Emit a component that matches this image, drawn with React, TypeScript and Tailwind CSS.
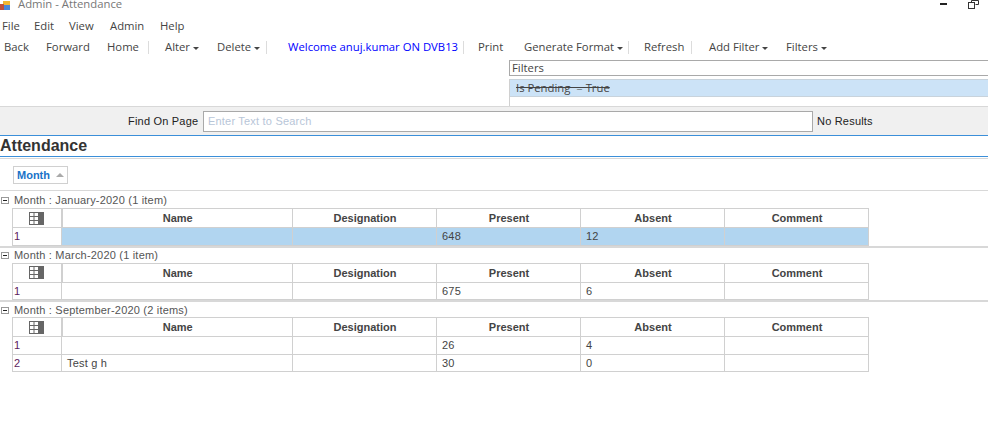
const ui = { fontFamily: '"Open Sans", "Noto Sans", sans-serif' };

type Row = { num: number; name?: string; present: string; absent: string; selected?: boolean };
type Group = { title: string; rows: Row[] };

const groups: Group[] = [
  { title: "Month : January-2020 (1 item)", rows: [{ num: 1, present: "648", absent: "12", selected: true }] },
  { title: "Month : March-2020 (1 item)", rows: [{ num: 1, present: "675", absent: "6" }] },
  {
    title: "Month : September-2020 (2 items)",
    rows: [
      { num: 1, present: "26", absent: "4" },
      { num: 2, name: "Test g h", present: "30", absent: "0" },
    ],
  },
];

const columns = ["Name", "Designation", "Present", "Absent", "Comment"];

function Caret() {
  return <span className="ml-[3px] inline-block border-x-[3px] border-t-[3px] border-x-transparent border-t-[#444] align-middle" />;
}

function Sep() {
  return <span className="h-[13px] w-px shrink-0 bg-[#dcdcdc]" />;
}

function GridIcon() {
  return (
    <svg width="15" height="13" viewBox="0 0 15 13" className="mx-auto block">
      <rect x="0.5" y="0.5" width="14" height="12" fill="#fff" stroke="#666" />
      <path d="M5 0v13M9.500 0v13M0 4.500h15M0 8.500h15" stroke="#666" />
      <rect x="10" y="0" width="5" height="13" fill="#666" />
    </svg>
  );
}

function Collapse() {
  return (
    <span className="flex h-[7px] w-[8px] items-center justify-center border border-[#999] bg-white">
      <span className="h-px w-[4px] bg-[#222]" />
    </span>
  );
}

function AppIcon() {
  return (
    <svg width="10" height="9" viewBox="0 0 10 9" className="shrink-0">
      <rect x="3" y="0" width="7" height="4" fill="#f2b632" />
      <rect x="0" y="3" width="4" height="6" fill="#c0503c" />
      <rect x="4" y="4" width="6" height="5" fill="#4a86d8" />
    </svg>
  );
}

export default function App() {
  return (
    <div className="h-[432px] w-[988px] overflow-hidden whitespace-nowrap bg-white text-[11.3px] text-[#444]" style={ui}>
      {/* title bar, cut off at the top */}
      <div className="flex h-[10px] items-center overflow-hidden">
        <AppIcon />
        <span className="ml-[8px] -translate-y-[1px] text-[#777]">Admin - Attendance</span>
        <div className="ml-auto mr-[9px] flex items-center gap-[21px]">
          <span className="h-[2px] w-[7px] -translate-y-[1px] bg-[#222]" />
          <svg width="11" height="9" viewBox="0 0 11 9" className="-translate-y-[1px]">
            <path d="M3.500 2.500V.500h7v4H7.500" fill="none" stroke="#333" />
            <rect x="0.500" y="2.500" width="6" height="6" fill="#fff" stroke="#333" />
          </svg>
        </div>
      </div>

      {/* menu */}
      <div className="mt-[7px] flex h-[18px] items-center pl-[2px]">
        <span className="w-[32px]">File</span>
        <span className="w-[35px]">Edit</span>
        <span className="w-[41px]">View</span>
        <span className="w-[50px]">Admin</span>
        <span>Help</span>
      </div>

      {/* toolbar */}
      <div className="mt-[4px] flex h-[17px] items-center pl-[4px]">
        <span className="w-[42px]">Back</span>
        <span className="w-[61px]">Forward</span>
        <span className="w-[41px]">Home</span>
        <Sep />
        <span className="ml-[16px] w-[52px]">Alter<Caret /></span>
        <span className="w-[49px]">Delete<Caret /></span>
        <Sep />
        <span className="ml-[21px] w-[175px] text-[#0000ff]">Welcome anuj.kumar ON DVB13</span>
        <Sep />
        <span className="ml-[14px] w-[46px]">Print</span>
        <span className="w-[104px]">Generate Format<Caret /></span>
        <Sep />
        <span className="ml-[15px] w-[47px]">Refresh</span>
        <Sep />
        <span className="ml-[17px] w-[77px]">Add Filter<Caret /></span>
        <span>Filters<Caret /></span>
      </div>

      {/* filters panel */}
      <div className="ml-[509px] mt-[4px] flex h-[46px] flex-col">
        <div className="flex h-[16px] items-center border-y border-l border-[#a9a9a9] pl-[2px] leading-none">Filters</div>
        <div className="mt-[3px] flex flex-1 flex-col border-l border-[#d0d0d0]">
          <div className="flex h-[18px] items-center border-y border-[#c8d3dc] bg-[#cce3f7] pl-[6px] line-through">Is Pending&nbsp; = True</div>
        </div>
      </div>

      {/* find bar */}
      <div className="flex h-[29px] items-center border-t border-[#d8d8d8] bg-[#f0f0f0] text-[11px] tracking-[0.2px] text-[#222]" style={{ fontFamily: '"Liberation Sans", sans-serif' }}>
        <span className="ml-[128px] w-[75px]">Find On Page</span>
        <div className="flex h-[21px] w-[610px] items-center border border-[#a9a9a9] bg-white pl-[4px] text-[#b8c6d8]">Enter Text to Search</div>
        <span className="ml-[4px]">No Results</span>
      </div>

      <div style={{ fontFamily: '"Liberation Sans", sans-serif' }} className="text-[11px]">
        {/* heading */}
        <div className="h-[22px] border-y border-[#3b8fd9] text-[16px] font-bold leading-[19px] text-[#333]">Attendance</div>
        <div className="mt-[1px] border-t border-[#d8d8d8]" />

        {/* group chip */}
        <div className="flex h-[32px] items-center border-b border-[#d8d8d8] pl-[13px] pt-[1px]">
          <div className="flex h-[18px] w-[55px] items-center border border-[#d0d0d0] pl-[3px] font-bold text-[#1a73c8]">
            Month
            <span className="ml-[6px] border-x-[4px] border-b-[4px] border-x-transparent border-b-[#aaa]" />
          </div>
        </div>

        {groups.map((group, idx) => (
          <div key={group.title} className={idx === 0 ? "" : "border-t-2 border-[#d8d8d8]"}>
            <div className={`flex items-center ${idx === 0 ? "h-[17px] pt-[1px]" : "-mb-px h-[16px]"}`}>
              <span className="ml-[1px]"><Collapse /></span>
              <span className="ml-[5px] tracking-[0.2px] text-[#555]">{group.title}</span>
            </div>
            <table className="ml-[12px] w-[856px] table-fixed border-collapse">
              <colgroup>
                <col className="w-[49px]" />
                <col className="w-[231px]" />
                <col className="w-[144px]" />
                <col className="w-[144px]" />
                <col className="w-[144px]" />
                <col className="w-[144px]" />
              </colgroup>
              <thead>
                <tr className="h-[19px]">
                  <th className="border border-r-2 border-[#d0d0d0] p-0"><GridIcon /></th>
                  {columns.map((c) => (
                    <th key={c} className={`border border-[#d0d0d0] p-0 pl-[1px] text-center font-bold leading-[13px] text-[#444] ${idx === 0 ? "" : "pt-[1px]"}`}>{c}</th>
                  ))}
                </tr>
              </thead>
              <tbody className="tracking-[0.2px]">
                {group.rows.map((row) => (
                  <tr key={row.num} className={`h-[17px] ${row.selected ? "bg-[#b1d5f0]" : ""}`}>
                    <td className="border border-[#d0d0d0] bg-white pl-[1px] text-[#5c1a5c]">{row.num}</td>
                    <td className="border border-[#d0d0d0] pl-[5px]">{row.name}</td>
                    <td className="border border-[#d0d0d0]" />
                    <td className="border border-[#d0d0d0] pl-[5px]">{row.present}</td>
                    <td className="border border-[#d0d0d0] pl-[5px]">{row.absent}</td>
                    <td className="border border-[#d0d0d0]" />
                  </tr>
                ))}
              </tbody>
            </table>
          </div>
        ))}
      </div>
    </div>
  );
}
